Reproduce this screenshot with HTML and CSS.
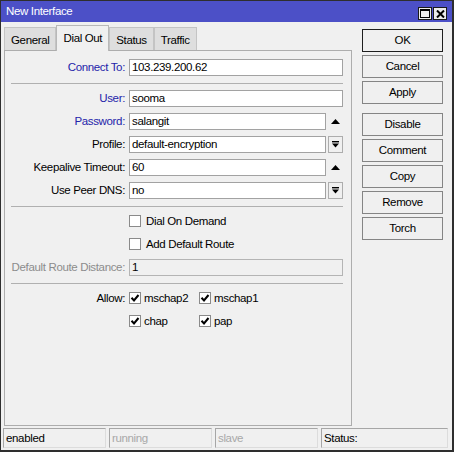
FILE: index.html
```html
<!DOCTYPE html>
<html lang="en">
<head>
  <meta charset="UTF-8">
  <title>New Interface</title>
  <link rel="stylesheet" href="styles.css">
</head>
<body>
  <div class="window">
    <div class="titlebar">
      <span class="title">New Interface</span>
      <div class="title-buttons">
        <span class="tbtn">
          <svg width="10" height="9" viewBox="0 0 10 9"><rect x="0.5" y="0.5" width="9" height="8" fill="none" stroke="#000"/><rect x="0" y="0" width="10" height="2" fill="#000"/></svg>
        </span>
        <span class="tbtn">
          <svg width="9" height="8" viewBox="0 0 9 8"><path d="M1 0.5L8 7.5M8 0.5L1 7.5" stroke="#000" stroke-width="2"/></svg>
        </span>
      </div>
    </div>

    <div class="main">
      <div class="left">
        <div class="tabs">
          <div class="tab">General</div>
          <div class="tab active">Dial Out</div>
          <div class="tab">Status</div>
          <div class="tab">Traffic</div>
        </div>

        <div class="panel">
          <div class="row">
            <span class="lbl blue">Connect To:</span>
            <div class="field">103.239.200.62</div>
          </div>
          <div class="sep"></div>

          <div class="row">
            <span class="lbl blue">User:</span>
            <div class="field">sooma</div>
          </div>
          <div class="row">
            <span class="lbl blue">Password:</span>
            <div class="field">salangit</div>
            <span class="side"><svg width="9" height="5" viewBox="0 0 9 5"><path d="M4.5 0L9 5H0z"/></svg></span>
          </div>
          <div class="row">
            <span class="lbl">Profile:</span>
            <div class="field">default-encryption</div>
            <span class="side drop"><svg width="7" height="7" viewBox="0 0 7 7"><rect x="0" y="0" width="7" height="1.4"/><path d="M0 2.6H7L3.5 6.6z"/></svg></span>
          </div>
          <div class="row">
            <span class="lbl">Keepalive Timeout:</span>
            <div class="field">60</div>
            <span class="side"><svg width="9" height="5" viewBox="0 0 9 5"><path d="M4.5 0L9 5H0z"/></svg></span>
          </div>
          <div class="row">
            <span class="lbl">Use Peer DNS:</span>
            <div class="field">no</div>
            <span class="side drop"><svg width="7" height="7" viewBox="0 0 7 7"><rect x="0" y="0" width="7" height="1.4"/><path d="M0 2.6H7L3.5 6.6z"/></svg></span>
          </div>
          <div class="sep"></div>

          <div class="row">
            <span class="lbl"></span>
            <label class="check"><span class="cb"></span>Dial On Demand</label>
          </div>
          <div class="row">
            <span class="lbl"></span>
            <label class="check"><span class="cb"></span>Add Default Route</label>
          </div>
          <div class="row">
            <span class="lbl gray">Default Route Distance:</span>
            <div class="field disabled">1</div>
          </div>
          <div class="sep"></div>

          <div class="row">
            <span class="lbl">Allow:</span>
            <label class="check fixed"><span class="cb"><svg width="10" height="10" viewBox="0 0 10 10"><path d="M1.5 4.8L4 7.5L8.5 2" fill="none" stroke="#000" stroke-width="2"/></svg></span>mschap2</label>
            <label class="check fixed"><span class="cb"><svg width="10" height="10" viewBox="0 0 10 10"><path d="M1.5 4.8L4 7.5L8.5 2" fill="none" stroke="#000" stroke-width="2"/></svg></span>mschap1</label>
          </div>
          <div class="row">
            <span class="lbl"></span>
            <label class="check fixed"><span class="cb"><svg width="10" height="10" viewBox="0 0 10 10"><path d="M1.5 4.8L4 7.5L8.5 2" fill="none" stroke="#000" stroke-width="2"/></svg></span>chap</label>
            <label class="check fixed"><span class="cb"><svg width="10" height="10" viewBox="0 0 10 10"><path d="M1.5 4.8L4 7.5L8.5 2" fill="none" stroke="#000" stroke-width="2"/></svg></span>pap</label>
          </div>
        </div>
      </div>

      <div class="buttons">
        <button class="btn default">OK</button>
        <button class="btn">Cancel</button>
        <button class="btn">Apply</button>
        <button class="btn group">Disable</button>
        <button class="btn">Comment</button>
        <button class="btn">Copy</button>
        <button class="btn">Remove</button>
        <button class="btn">Torch</button>
      </div>
    </div>

    <div class="statusbar">
      <div class="cell">enabled</div>
      <div class="cell dim">running</div>
      <div class="cell dim">slave</div>
      <div class="cell wide">Status:</div>
    </div>
  </div>
</body>
</html>
```

FILE: styles.css
```css
body {
  margin: 0;
  padding: 0;
  font-family: "Liberation Sans", Arial, sans-serif;
  font-size: 11.5px;
  letter-spacing: -0.35px;
  color: #000;
  background: #f0f0f0;
}

.window {
  width: 454px;
  height: 452px;
  box-sizing: border-box;
  border: 1px solid #2e2e2e;
  border-right-width: 2px;
  border-bottom-width: 2px;
  background: #f0f0f0;
  display: flex;
  flex-direction: column;
}

/* Title bar */
.titlebar {
  height: 21px;
  background: #4c50c7;
  display: flex;
  align-items: center;
  justify-content: space-between;
  padding: 0 5px 0 5px;
}

.title {
  color: #fff;
}

.title-buttons {
  display: flex;
  gap: 1px;
  margin-top: 5px;
}

.tbtn {
  width: 14px;
  height: 13px;
  box-sizing: border-box;
  border: 1px solid #1a1a1a;
  background: #ececec;
  display: flex;
  align-items: center;
  justify-content: center;
}

/* Main area */
.main {
  display: flex;
  height: 406px;
}

.left {
  padding: 3px 0 0 3px;
  width: 348px;
}

.tabs {
  display: flex;
  height: 25px;
  align-items: flex-end;
  position: relative;
  z-index: 1;
}

.tab {
  height: 23px;
  box-sizing: border-box;
  padding: 0 6px;
  border: 1px solid #c4c4c4;
  border-bottom: none;
  background: #dedede;
  display: flex;
  align-items: center;
  padding-top: 3px;
}

.tab.active {
  height: 26px;
  margin-bottom: -1px;
  background: #f0f0f0;
  border-color: #b8b8b8;
  padding-top: 0;
  padding-bottom: 1px;
}

.panel {
  height: 376px;
  box-sizing: border-box;
  border: 1px solid #adadad;
  padding: 8px 8px 0 0;
}

.row {
  display: flex;
  align-items: center;
  height: 17px;
  margin-bottom: 6px;
}

.lbl {
  width: 120px;
  flex-shrink: 0;
  text-align: right;
  margin-right: 4px;
  white-space: nowrap;
}

.lbl.blue {
  color: #2424aa;
}

.lbl.gray {
  color: #8c8c8c;
}

.field {
  flex: 1;
  height: 17px;
  box-sizing: border-box;
  border: 1px solid #a2a2a2;
  background: #fff;
  padding: 0 2px;
  line-height: 15px;
  white-space: nowrap;
  overflow: hidden;
}

.field.disabled {
  background: #f0f0f0;
  border-color: #b4b4b4;
}

.side {
  width: 15px;
  height: 17px;
  margin-left: 2px;
  box-sizing: border-box;
  display: flex;
  align-items: center;
  justify-content: center;
  flex-shrink: 0;
}

.side.drop {
  border: 1px solid #adadad;
  background: #f0f0f0;
}

.sep {
  height: 1px;
  background: #b0b0b0;
  margin: 7px 0 6px 6px;
}

/* Checkboxes */
.check {
  display: flex;
  align-items: center;
  white-space: nowrap;
}

.check.fixed {
  width: 70px;
}

.cb {
  width: 12px;
  height: 12px;
  box-sizing: border-box;
  border: 1px solid #8a8a8a;
  background: #fff;
  margin-right: 5px;
  display: flex;
  align-items: center;
  justify-content: center;
}

.check.fixed .cb {
  margin-right: 3px;
}

/* Right buttons */
.buttons {
  margin-left: 10px;
  padding-top: 7px;
  display: flex;
  flex-direction: column;
  gap: 3px;
}

.btn {
  width: 81px;
  height: 23px;
  box-sizing: border-box;
  border: 1px solid #858585;
  background: #f0f0f0;
  font-family: "Liberation Sans", Arial, sans-serif;
  font-size: 11.5px;
  letter-spacing: -0.35px;
  color: #000;
  padding: 0;
  border-radius: 0;
}

.btn.default {
  border-color: #1e1e1e;
}

.btn.group {
  margin-top: 6px;
}

/* Status bar */
.statusbar {
  display: flex;
  gap: 3px;
  padding: 2px 4px 2px 2px;
}

.cell {
  width: 103px;
  height: 20px;
  box-sizing: border-box;
  border: 1px solid #a6a6a6;
  border-right-color: #dcdcdc;
  border-bottom-color: #dcdcdc;
  padding-left: 2px;
  line-height: 18px;
}

.cell.dim {
  color: #a8a8a8;
}

.cell.wide {
  flex: 1;
}
```
